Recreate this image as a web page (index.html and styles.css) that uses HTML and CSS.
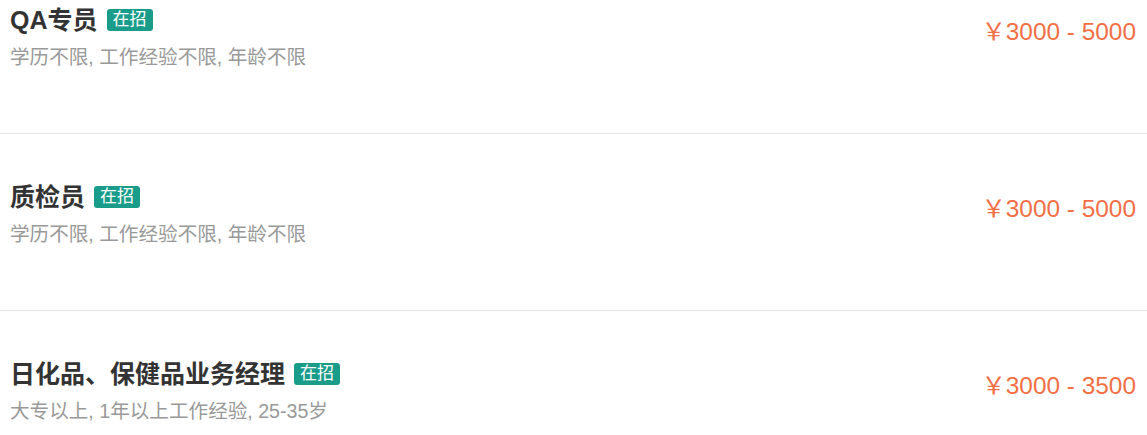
FILE: index.html
```html
<!DOCTYPE html>
<html lang="zh-CN">
<head>
<meta charset="utf-8">
<title>职位列表</title>
<link rel="stylesheet" href="styles.css">
</head>
<body>
<ul class="job-list">
  <li class="job">
    <div class="job-info">
      <div class="job-title"><span class="job-name">QA专员</span><span class="tag">在招</span></div>
      <div class="job-req">学历不限, 工作经验不限, 年龄不限</div>
    </div>
    <div class="salary">￥3000 - 5000</div>
  </li>
  <li class="job">
    <div class="job-info">
      <div class="job-title"><span class="job-name">质检员</span><span class="tag">在招</span></div>
      <div class="job-req">学历不限, 工作经验不限, 年龄不限</div>
    </div>
    <div class="salary">￥3000 - 5000</div>
  </li>
  <li class="job">
    <div class="job-info">
      <div class="job-title"><span class="job-name">日化品、保健品业务经理</span><span class="tag">在招</span></div>
      <div class="job-req">大专以上, 1年以上工作经验, 25-35岁</div>
    </div>
    <div class="salary">￥3000 - 3500</div>
  </li>
</ul>
</body>
</html>
```

FILE: styles.css
```css
html, body {
  margin: 0;
  padding: 0;
  background: #fff;
}

body {
  font-family: "Liberation Sans", "Noto Sans CJK SC", sans-serif;
  overflow: hidden;
}

.job-list {
  list-style: none;
  margin: -43px 0 0;
  padding: 0;
}

.job {
  display: flex;
  justify-content: space-between;
  align-items: flex-start;
  padding: 47px 11px 0 10px;
  box-sizing: border-box;
  height: 177px;
  border-bottom: 1px solid #e5e5e5;
}

.job-info {
  display: flex;
  flex-direction: column;
}

.job-title {
  display: flex;
  align-items: center;
  height: 32px;
}

.job-name {
  font-size: 25px;
  font-weight: bold;
  color: #333;
  line-height: 32px;
}

.tag {
  margin-left: 9px;
  padding: 0 6px;
  height: 22px;
  line-height: 22px;
  font-size: 17px;
  color: #fff;
  background: #1a9c8b;
  border-radius: 3px;
}

.job-req {
  margin-top: 7px;
  font-size: 19.6px;
  line-height: 28px;
  color: #999;
}

.salary {
  margin-top: 12px;
  font-size: 24.4px;
  line-height: 32px;
  color: #f26f45;
}
```
